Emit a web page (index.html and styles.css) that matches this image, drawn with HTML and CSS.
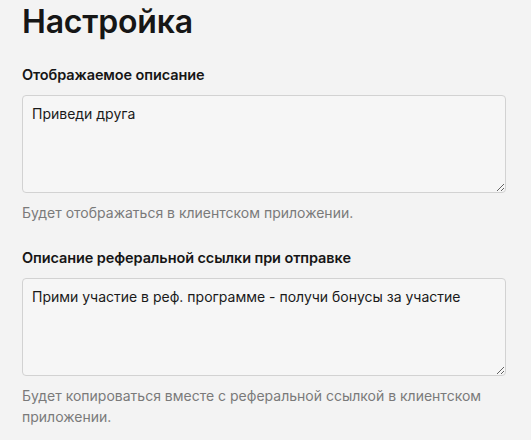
FILE: index.html
```html
<!DOCTYPE html>
<html lang="ru">
<head>
<meta charset="utf-8">
<link rel="stylesheet" href="styles.css">
</head>
<body>
<main class="page">
  <h1 class="title">Настройка</h1>
  <div class="field">
    <label class="label" for="d1">Отображаемое описание</label>
    <textarea id="d1" class="input">Приведи друга</textarea>
    <p class="help">Будет отображаться в клиентском приложении.</p>
  </div>
  <div class="field">
    <label class="label" for="d2">Описание реферальной ссылки при отправке</label>
    <textarea id="d2" class="input">Прими участие в реф. программе - получи бонусы за участие</textarea>
    <p class="help">Будет копироваться вместе с реферальной ссылкой в клиентском приложении.</p>
  </div>
</main>
</body>
</html>
```
FILE: styles.css
```css
html, body {
  margin: 0;
  padding: 0;
  background: #f3f3f3;
}
body {
  font-family: Inter, "Noto Sans", sans-serif;
  color: #1a1a1a;
}
.page {
  padding: 0 25px 0 22px;
}
.title {
  margin: 0;
  padding-top: 2px;
  font-size: 32px;
  font-weight: 600;
  line-height: 40px;
  letter-spacing: -0.2px;
  color: #161616;
}
.field {
  display: flex;
  flex-direction: column;
}
.field + .field {
  margin-top: 24px;
}
.label {
  margin-top: 22px;
  font-size: 14.5px;
  font-weight: 600;
  line-height: 22px;
  letter-spacing: -0.1px;
  color: #161616;
}
.field + .field .label {
  margin-top: 0;
}
.input {
  margin-top: 9px;
  box-sizing: border-box;
  width: 484px;
  height: 98px;
  padding: 7px 9px;
  border: 1px solid #d2d2d2;
  border-radius: 4px;
  background: #f6f6f6;
  font-family: inherit;
  font-size: 14px;
  line-height: 22px;
  color: #1a1a1a;
  resize: vertical;
}
.help {
  margin: 9px 0 0;
  font-size: 14px;
  line-height: 21px;
  color: #7a7a7a;
}
```
